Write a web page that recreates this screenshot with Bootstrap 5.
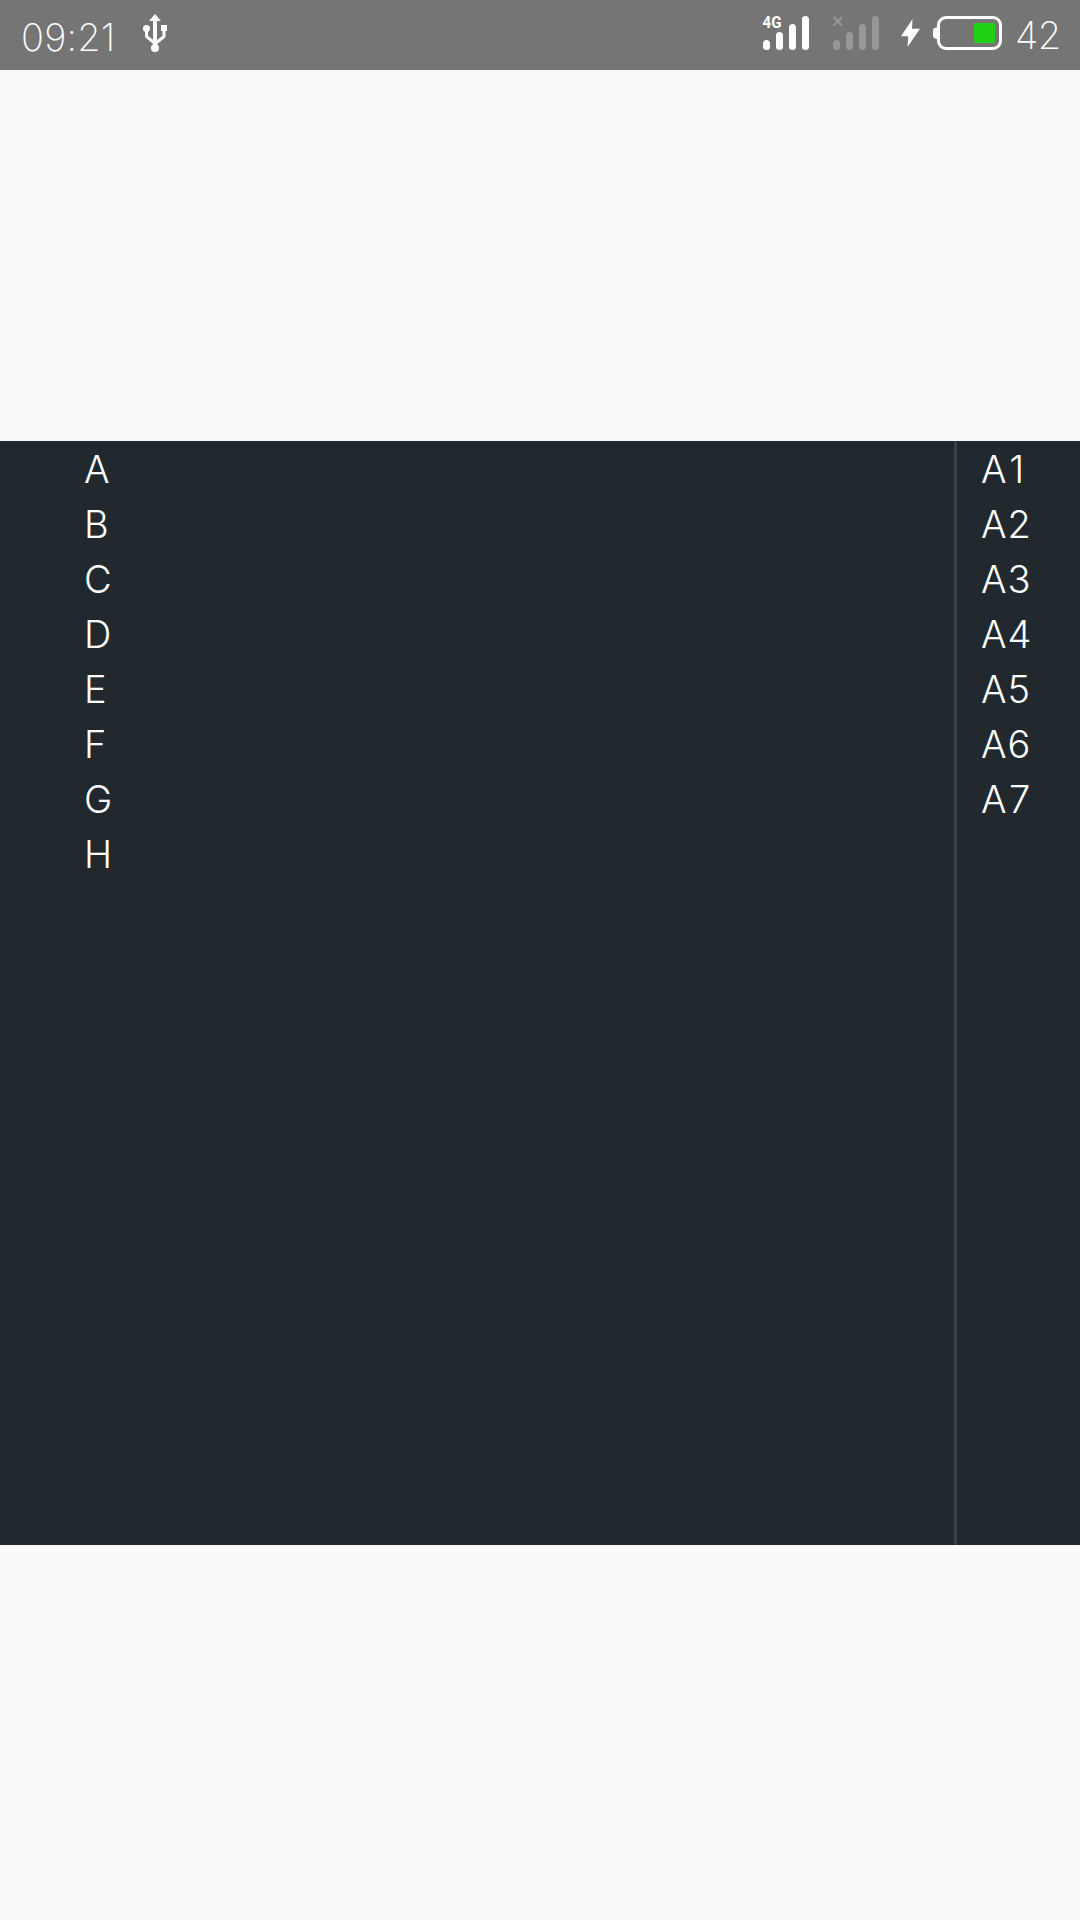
<!DOCTYPE html>
<html lang="en">
<head>
<meta charset="utf-8">
<meta name="viewport" content="width=device-width, initial-scale=1">
<title>Two-level list</title>
<link href="https://cdn.jsdelivr.net/npm/bootstrap@5.3.0/dist/css/bootstrap.min.css" rel="stylesheet">
<style>
body{background:#fafafa;font-family:Inter,Roboto,"Liberation Sans",sans-serif;font-weight:300;height:1920px;overflow:hidden}
.status-bar{height:70px;background:#757575;padding-left:21px;padding-right:20px}
.status-bar svg{display:block;flex:none}
.status-text{font-size:38px;line-height:46px;font-weight:250}
.clock{width:96px;margin-top:2px;letter-spacing:.2px;font-feature-settings:"calt" 0;padding-top:6px}
.usb{margin-left:25px}
.sim-two{margin-left:22px}
.bolt{margin-left:20px}
.battery{margin-left:13px}
.level{width:45px;margin-left:13px;letter-spacing:-.4px}
.picker{height:1104px;margin-top:371px;background:#21292f;color:#fff;font-size:38px;line-height:55px}
.main-list{width:954px;padding-left:84px}
.sub-list{border-left:3px solid #394148;padding-left:24px;letter-spacing:.9px}
.sub-list li:first-child{letter-spacing:4px}
.sub-list li:last-child{letter-spacing:2.5px}
.picker li{height:55px;padding-top:1px}
</style>
</head>
<body>
<header class="status-bar d-flex align-items-start text-white">
  <div class="status-text clock mt-2 text-nowrap">09:21</div>
  <svg class="usb" width="26" height="70" viewBox="142 0 26 70" fill="#fff">
    <path d="M155 14l6 7h-4v27h-4V21h-4z"/>
    <circle cx="155" cy="48" r="4"/><circle cx="146.500" cy="28.500" r="3.500"/><path d="M161 25h6v6h-6z"/>
    <path d="M146.500 29v7.500l8 6.500M164 29v7.500l-8 6.500" fill="none" stroke="#fff" stroke-width="3"/>
  </svg>
  <svg class="ms-auto" width="48" height="70" viewBox="762 0 48 70" fill="#fff">
    <text x="762.500" y="27.500" font-family="Roboto" font-size="16" font-weight="700" textLength="19" lengthAdjust="spacingAndGlyphs">4G</text>
    <rect x="763" y="40" width="7" height="10" rx="3.500"/><rect x="776" y="32" width="7" height="18" rx="3.500"/><rect x="789" y="24" width="7" height="26" rx="3.500"/><rect x="802" y="16" width="7" height="34" rx="3.500"/>
  </svg>
  <svg class="sim-two" width="48" height="70" viewBox="832 0 48 70" fill="#979797">
    <path d="M833.500 17l8.500 8.500M842 17l-8.500 8.500" stroke="#979797" stroke-width="2"/>
    <rect x="833" y="40" width="7" height="10" rx="3.500"/><rect x="846" y="32" width="7" height="18" rx="3.500"/><rect x="859" y="24" width="7" height="26" rx="3.500"/><rect x="872" y="16" width="7" height="34" rx="3.500"/>
  </svg>
  <svg class="bolt" width="20" height="70" viewBox="900 0 20 70" fill="#fff"><path d="M912.500 19l-11.500 17.300h7.300L907.500 47l12.500-18.300h-8z"/></svg>
  <svg class="battery" width="69" height="70" viewBox="933 0 69 70">
    <path d="M939 27.500h-2a4 4 0 0 0-4 6 4 4 0 0 0 4 5.500h2z" fill="#fff"/>
    <rect x="938.500" y="17.500" width="62" height="31" rx="7.500" fill="none" stroke="#fff" stroke-width="3"/>
    <rect x="974" y="23" width="21" height="20" rx="1.500" fill="#20d213"/>
  </svg>
  <div class="status-text level mt-2 pt-1 text-nowrap">42</div>
</header>
<main class="picker d-flex">
  <ul class="main-list list-unstyled mb-0">
    <li>A</li><li>B</li><li>C</li><li>D</li><li>E</li><li>F</li><li>G</li><li>H</li>
  </ul>
  <ul class="sub-list list-unstyled mb-0 flex-fill">
    <li>A1</li><li>A2</li><li>A3</li><li>A4</li><li>A5</li><li>A6</li><li>A7</li>
  </ul>
</main>
<script src="https://cdn.jsdelivr.net/npm/bootstrap@5.3.0/dist/js/bootstrap.bundle.min.js"></script>
</body>
</html>
